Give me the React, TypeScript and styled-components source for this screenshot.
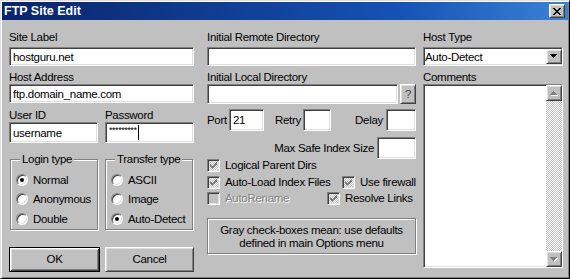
import React, { FC, ReactNode } from "react";
import styled, { createGlobalStyle, css } from "styled-components";

const GlobalStyle = createGlobalStyle`
  * { box-sizing: border-box; }
  html, body { margin: 0; padding: 0; background: #c0c0c0; }
  body {
    font-family: "Liberation Sans", Arial, sans-serif;
    font-size: 11.5px;
    letter-spacing: -0.3px;
    color: #000;
  }
`;

const sunken = css`
  border: 1px solid;
  border-color: #808080 #fff #fff #808080;
  box-shadow: inset 1px 1px 0 #404040, inset -1px -1px 0 #dfdfdf;
`;

const raised = css`
  border: 1px solid;
  border-color: #fff #404040 #404040 #fff;
  box-shadow: inset 1px 1px 0 #dfdfdf, inset -1px -1px 0 #808080;
`;

const etched = css`
  border: 1px solid #808080;
  box-shadow: inset 1px 1px 0 #fff, 1px 1px 0 #fff;
`;

const checker = css`
  background: repeating-conic-gradient(#fff 0 25%, #c0c0c0 0 50%) 0 0 / 2px 2px;
`;

const Window = styled.div`
  width: 570px;
  height: 279px;
  display: flex;
  flex-direction: column;
  padding: 1px;
  background: #c0c0c0;
  border: 1px solid;
  border-color: #dfdfdf #000 #000 #dfdfdf;
  box-shadow: inset 1px 1px 0 #fff, inset -1px -1px 0 #808080;
`;

const TitleBar = styled.div`
  height: 18px;
  flex-shrink: 0;
  display: flex;
  align-items: center;
  justify-content: space-between;
  padding: 0 3px 0 2px;
  background: linear-gradient(90deg, #0a246a 0%, #1552b4 70%, #3a82d6 100%);
  color: #fff;
  font-weight: bold;
  font-size: 12.5px;
  letter-spacing: 0;
`;

const CloseButton = styled.div`
  ${raised};
  width: 16px;
  height: 14px;
  background: #c0c0c0;
  display: flex;
  align-items: center;
  justify-content: center;
`;

const Body = styled.div`
  flex: 1;
  display: flex;
  align-items: flex-start;
  padding: 11px 0 0 7px;
`;

const Column = styled.div<{ $w: number; $ml?: number }>`
  width: ${(p) => p.$w}px;
  margin-left: ${(p) => p.$ml ?? 0}px;
  display: flex;
  flex-direction: column;
`;

const Label = styled.div<{ $mt?: number }>`
  height: 13px;
  line-height: 13px;
  margin-top: ${(p) => p.$mt ?? 0}px;
  white-space: nowrap;
`;

const Field = styled.div<{ $h?: number; $w?: number; $mt?: number; $ml?: number; $grow?: boolean; $pl?: number }>`
  ${sunken};
  background: #fff;
  height: ${(p) => p.$h ?? 19}px;
  width: ${(p) => (p.$w ? `${p.$w}px` : "auto")};
  flex: ${(p) => (p.$grow ? 1 : "none")};
  margin-top: ${(p) => p.$mt ?? 0}px;
  margin-left: ${(p) => p.$ml ?? 0}px;
  padding: 0 3px 0 ${(p) => p.$pl ?? 3}px;
  display: flex;
  align-items: center;
  white-space: nowrap;
  overflow: hidden;
`;

const Pair = styled.div<{ $mt?: number }>`
  display: flex;
  justify-content: space-between;
  margin-top: ${(p) => p.$mt ?? 0}px;
`;

const Stack = styled.div<{ $w: number }>`
  width: ${(p) => p.$w}px;
  display: flex;
  flex-direction: column;
`;

const Stars = styled.span`
  font-size: 9px;
  letter-spacing: -0.45px;
  align-self: flex-start;
  margin-top: 2px;
`;

const Caret = styled.span`
  width: 1px;
  height: 15px;
  margin-left: 2px;
  background: #000;
`;

const GroupRow = styled.div`
  display: flex;
  justify-content: space-between;
  padding: 0 1px;
  margin-top: 16px;
`;

const GroupBox = styled.div`
  ${etched};
  position: relative;
  width: 88px;
  padding: 10px 0 0 5px;
`;

const Legend = styled.span`
  position: absolute;
  top: -7px;
  left: 9px;
  padding: 0 2px;
  line-height: 13px;
  background: #c0c0c0;
  white-space: nowrap;
`;

const RadioRow = styled.div`
  height: 19.5px;
  display: flex;
  align-items: center;
  gap: 5px;
  white-space: nowrap;
`;

const RadioCircle = styled.span`
  ${sunken};
  width: 12px;
  height: 12px;
  border-radius: 50%;
  background: #fff;
  display: flex;
  align-items: center;
  justify-content: center;
`;

const RadioDot = styled.span`
  width: 4px;
  height: 4px;
  border-radius: 50%;
  background: #000;
`;

const ButtonRow = styled.div`
  display: flex;
  justify-content: space-between;
  margin-top: 17px;
`;

const PushButton = styled.div<{ $w: number; $default?: boolean }>`
  width: ${(p) => p.$w}px;
  height: 25px;
  background: #c0c0c0;
  display: flex;
  align-items: center;
  justify-content: center;
  ${(p) =>
    p.$default
      ? css`
          border: 1px solid #000;
          box-shadow: inset 1px 1px 0 #fff, inset -1px -1px 0 #404040, inset 2px 2px 0 #dfdfdf,
            inset -2px -2px 0 #808080;
        `
      : raised};
`;

const FieldRow = styled.div<{ $mt?: number; $end?: boolean }>`
  display: flex;
  align-items: center;
  justify-content: ${(p) => (p.$end ? "flex-end" : "flex-start")};
  margin-top: ${(p) => p.$mt ?? 0}px;
`;

const SmallButton = styled.div`
  ${raised};
  width: 16px;
  height: 20px;
  margin-left: 2px;
  background: #c0c0c0;
  display: flex;
  align-items: center;
  justify-content: center;
  color: #404040;
`;

const InlineLabel = styled.span<{ $ml?: number; $auto?: boolean }>`
  line-height: 13px;
  white-space: nowrap;
  margin-left: ${(p) => (p.$auto ? "auto" : `${p.$ml ?? 0}px`)};
`;

const CheckRow = styled.div<{ $mt?: number }>`
  height: 16.5px;
  display: flex;
  align-items: flex-start;
  margin-top: ${(p) => p.$mt ?? 0}px;
`;

const CheckItem = styled.div<{ $w?: number; $disabled?: boolean }>`
  display: flex;
  align-items: flex-start;
  gap: 5px;
  white-space: nowrap;
  line-height: 13px;
  ${(p) =>
    p.$w &&
    css`
      width: ${p.$w}px;
      margin-left: auto;
    `}
  color: ${(p) => (p.$disabled ? "#808080" : "#000")};
  text-shadow: ${(p) => (p.$disabled ? "1px 1px 0 #fff" : "none")};
`;

const CheckBox = styled.span<{ $grayed?: boolean }>`
  ${sunken};
  width: 13px;
  height: 13px;
  flex: none;
  display: flex;
  align-items: center;
  justify-content: center;
  ${(p) => (p.$grayed ? checker : "background: #c0c0c0;")}
`;

const InfoBox = styled.div`
  ${etched};
  margin-top: 9.5px;
  height: 36px;
  padding-top: 5px;
  text-align: center;
  line-height: 12.5px;
`;

const Select = styled(Field)`
  justify-content: space-between;
  padding: 0 0 0 1px;
`;

const DropButton = styled.div`
  ${raised};
  width: 16px;
  height: 15px;
  background: #c0c0c0;
  display: flex;
  align-items: center;
  justify-content: center;
`;

const CommentsBox = styled.div`
  ${sunken};
  height: 184px;
  background: #fff;
  display: flex;
  justify-content: flex-end;
`;

const ScrollBar = styled.div`
  width: 16px;
  display: flex;
  flex-direction: column;
`;

const ScrollButton = styled.div`
  ${raised};
  width: 16px;
  height: 16px;
  background: #c0c0c0;
  display: flex;
  align-items: center;
  justify-content: center;
`;

const ScrollTrack = styled.div`
  flex: 1;
  ${checker};
`;

const upPath = "M3 0h1v1h-1z M2 1h3v1h-3z M1 2h5v1h-5z M0 3h7v1h-7z";
const downPath = "M0 0h7v1h-7z M1 1h5v1h-5z M2 2h3v1h-3z M3 3h1v1h-1z";

const Arrow: FC<{ dir: "up" | "down"; disabled?: boolean }> = ({ dir, disabled }) => {
  const d = dir === "up" ? upPath : downPath;
  return (
    <svg width="8" height="5" viewBox="0 0 8 5" shapeRendering="crispEdges">
      {disabled && <path d={d} fill="#fff" transform="translate(1 1)" />}
      <path d={d} fill={disabled ? "#808080" : "#000"} />
    </svg>
  );
};

const CloseGlyph = () => (
  <svg width="8" height="7" viewBox="0 0 8 7" shapeRendering="crispEdges">
    <path
      fill="#000"
      d="M0 0h2v1h-2z M6 0h2v1h-2z M1 1h2v1h-2z M5 1h2v1h-2z M2 2h4v1h-4z M3 3h2v1h-2z M2 4h4v1h-4z M1 5h2v1h-2z M5 5h2v1h-2z M0 6h2v1h-2z M6 6h2v1h-2z"
    />
  </svg>
);

const CheckGlyph = () => (
  <svg width="7" height="7" viewBox="0 0 7 7" shapeRendering="crispEdges">
    <path
      fill="#808080"
      d="M6 0h1v1h-1z M5 1h2v1h-2z M0 2h1v1h-1z M4 2h3v1h-3z M0 3h2v1h-2z M3 3h3v1h-3z M0 4h5v1h-5z M1 5h3v1h-3z M2 6h1v1h-1z"
    />
  </svg>
);

const Radio: FC<{ checked?: boolean; children: ReactNode }> = ({ checked, children }) => (
  <RadioRow>
    <RadioCircle>{checked && <RadioDot />}</RadioCircle>
    {children}
  </RadioRow>
);

const Check: FC<{ grayed?: boolean; disabled?: boolean; w?: number; children: ReactNode }> = ({
  grayed,
  disabled,
  w,
  children,
}) => (
  <CheckItem $w={w} $disabled={disabled}>
    <CheckBox $grayed={grayed}>{grayed && <CheckGlyph />}</CheckBox>
    {children}
  </CheckItem>
);

export default function App() {
  return (
    <>
      <GlobalStyle />
      <Window>
        <TitleBar>
          FTP Site Edit
          <CloseButton>
            <CloseGlyph />
          </CloseButton>
        </TitleBar>
        <Body>
          <Column $w={185}>
            <Label>Site Label</Label>
            <Field $mt={3}>hostguru.net</Field>
            <Label $mt={5}>Host Address</Label>
            <Field>ftp.domain_name.com</Field>
            <Pair $mt={6}>
              <Stack $w={89}>
                <Label>User ID</Label>
                <Field $h={21}>username</Field>
              </Stack>
              <Stack $w={89}>
                <Label>Password</Label>
                <Field $h={21}>
                  <Stars>*********</Stars>
                  <Caret />
                </Field>
              </Stack>
            </Pair>
            <GroupRow>
              <GroupBox>
                <Legend>Login type</Legend>
                <Radio checked>Normal</Radio>
                <Radio>Anonymous</Radio>
                <Radio>Double</Radio>
              </GroupBox>
              <GroupBox>
                <Legend>Transfer type</Legend>
                <Radio>ASCII</Radio>
                <Radio>Image</Radio>
                <Radio checked>Auto-Detect</Radio>
              </GroupBox>
            </GroupRow>
            <ButtonRow>
              <PushButton $w={91} $default>
                OK
              </PushButton>
              <PushButton $w={89}>Cancel</PushButton>
            </ButtonRow>
          </Column>

          <Column $w={209} $ml={13}>
            <Label>Initial Remote Directory</Label>
            <Field $mt={3} />
            <Label $mt={5}>Initial Local Directory</Label>
            <FieldRow>
              <Field $h={20} $grow />
              <SmallButton>?</SmallButton>
            </FieldRow>
            <FieldRow $mt={5}>
              <InlineLabel>Port</InlineLabel>
              <Field $w={35} $h={22} $ml={2}>
                21
              </Field>
              <InlineLabel $ml={11}>Retry</InlineLabel>
              <Field $w={28} $h={22} $ml={2} />
              <InlineLabel $auto>Delay</InlineLabel>
              <Field $w={30} $h={22} $ml={3} />
            </FieldRow>
            <FieldRow $mt={6} $end>
              <InlineLabel>Max Safe Index Size</InlineLabel>
              <Field $w={39} $h={22} $ml={3} />
            </FieldRow>
            <CheckRow>
              <Check grayed>Logical Parent Dirs</Check>
            </CheckRow>
            <CheckRow>
              <Check grayed>Auto-Load Index Files</Check>
              <Check grayed w={74}>
                Use firewall
              </Check>
            </CheckRow>
            <CheckRow>
              <Check disabled>AutoRename</Check>
              <Check grayed w={89}>
                Resolve Links
              </Check>
            </CheckRow>
            <InfoBox>
              Gray check-boxes mean: use defaults
              <br />
              defined in main Options menu
            </InfoBox>
          </Column>

          <Column $w={140} $ml={7}>
            <Label>Host Type</Label>
            <Select $mt={3}>
              Auto-Detect
              <DropButton>
                <Arrow dir="down" />
              </DropButton>
            </Select>
            <Label $mt={5}>Comments</Label>
            <CommentsBox>
              <ScrollBar>
                <ScrollButton>
                  <Arrow dir="up" disabled />
                </ScrollButton>
                <ScrollTrack />
                <ScrollButton>
                  <Arrow dir="down" disabled />
                </ScrollButton>
              </ScrollBar>
            </CommentsBox>
          </Column>
        </Body>
      </Window>
    </>
  );
}
